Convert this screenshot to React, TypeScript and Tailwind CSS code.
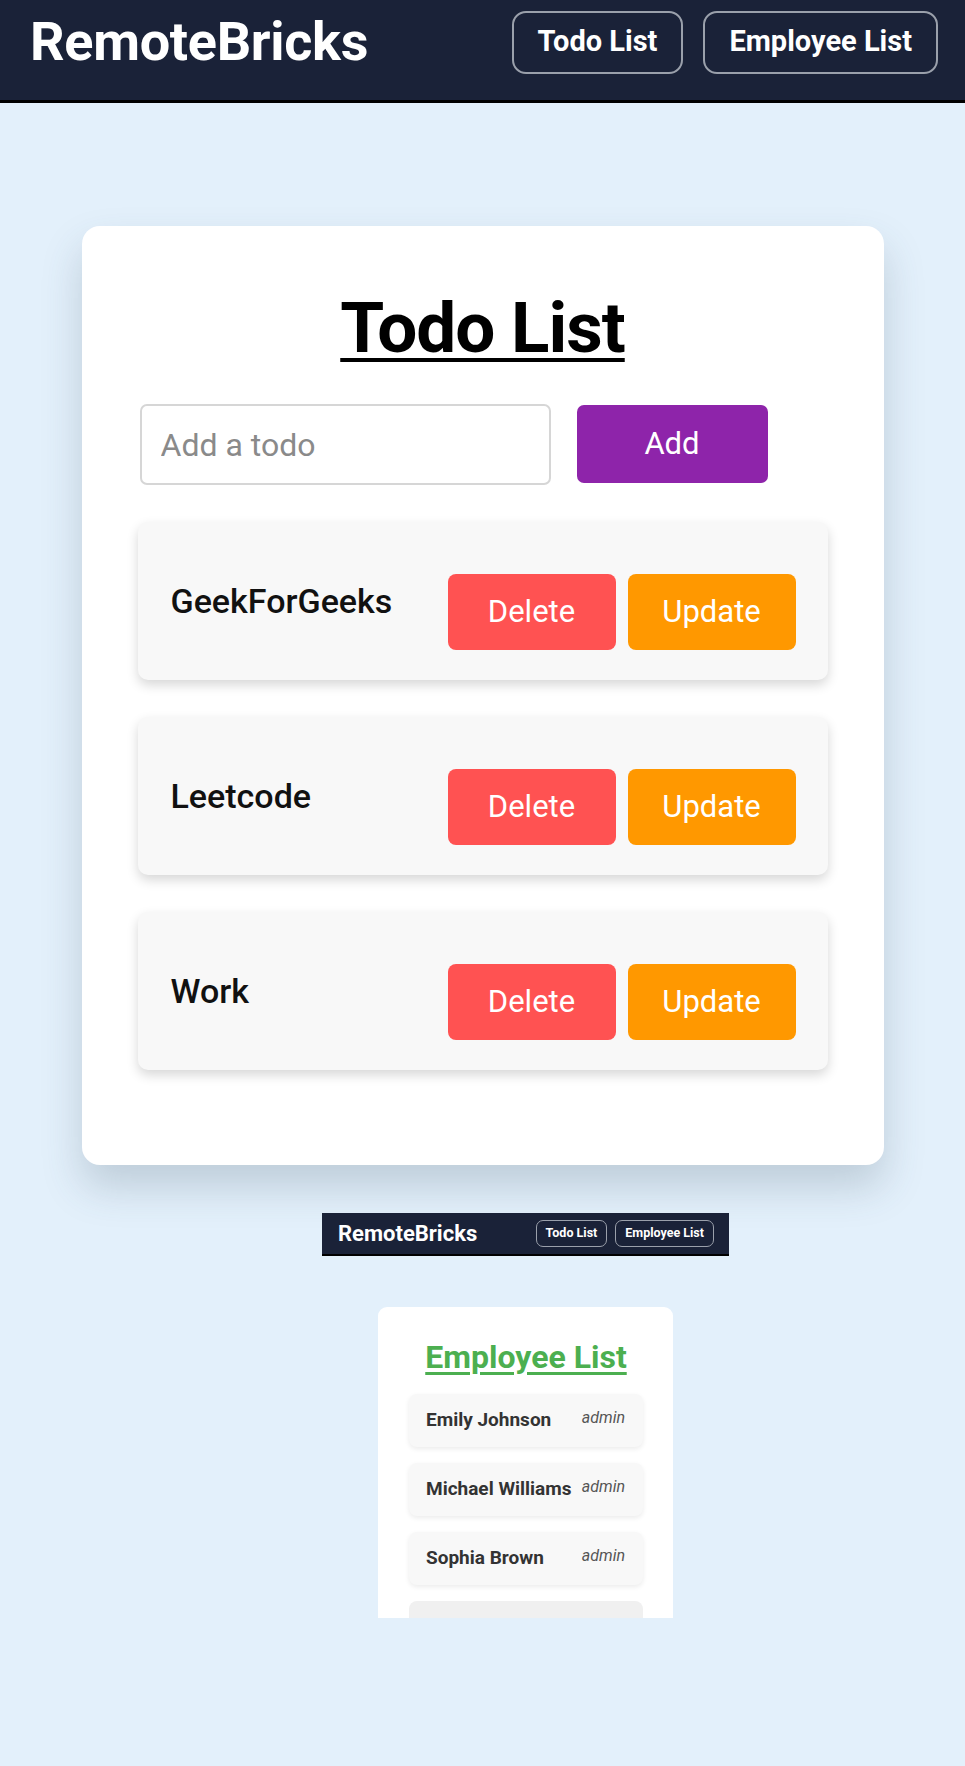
import { useState } from 'react';

type Todo = { id: number; text: string };
type Employee = { id: number; name: string; role: string };

const initialTodos: Todo[] = [
  { id: 1, text: 'GeekForGeeks' },
  { id: 2, text: 'Leetcode' },
  { id: 3, text: 'Work' }
];

const employees: Employee[] = [
  { id: 1, name: 'Emily Johnson', role: 'admin' },
  { id: 2, name: 'Michael Williams', role: 'admin' },
  { id: 3, name: 'Sophia Brown', role: 'admin' }
];

const Navbar = () => (
  <header className="flex h-[103px] items-center justify-between border-b-[3px] border-black bg-[#1a2238] pb-4 pl-[30px] pr-[27px]">
    <h1 className="text-[54px] leading-none font-bold tracking-[-0.3px] text-white">RemoteBricks</h1>
    <nav className="flex gap-5">
      <button className="h-[63px] rounded-[14px] border-2 border-[#9aa0ab] px-[24px] text-[29px] font-bold text-white">
        Todo List
      </button>
      <button className="h-[63px] rounded-[14px] border-2 border-[#9aa0ab] px-[24px] text-[29px] font-bold text-white">
        Employee List
      </button>
    </nav>
  </header>
);

const MiniNavbar = () => (
  <div className="flex h-[43px] items-center justify-between border-b-2 border-black bg-[#1a2238] pl-4 pr-[15px]">
    <span className="text-[22px] leading-none font-bold text-white">RemoteBricks</span>
    <div className="flex gap-2">
      <span className="flex h-[27px] items-center rounded-[7px] border border-[#9aa0ab] px-[9px] text-[12.5px] font-bold text-white">
        Todo List
      </span>
      <span className="flex h-[27px] items-center rounded-[7px] border border-[#9aa0ab] px-[9px] text-[12.5px] font-bold text-white">
        Employee List
      </span>
    </div>
  </div>
);

const TodoCard = () => {
  const [todos, setTodos] = useState<Todo[]>(initialTodos);
  const [draft, setDraft] = useState('');

  const addTodo = () => {
    if (!draft.trim()) return;
    setTodos((prev) => [...prev, { id: Date.now(), text: draft.trim() }]);
    setDraft('');
  };

  return (
    <section className="mx-auto mt-[123px] w-[802px] rounded-[18px] bg-white px-[56px] pt-[66px] pb-[95px] shadow-[0_22px_40px_rgba(60,80,100,0.22)]">
      <h2 className="text-center text-[71px] leading-none font-bold tracking-[-1px] text-black underline decoration-[4px] underline-offset-[6px]">
        Todo List
      </h2>
      <div className="mt-[41px] flex gap-[26px] pl-[2px]">
        <input
          value={draft}
          onChange={(e) => setDraft(e.target.value)}
          placeholder="Add a todo"
          className="h-[81px] w-[411px] rounded-[7px] border-2 border-[#d6d6d6] bg-white px-[19px] text-[32px] text-black outline-none placeholder:text-[#8a8a8a]"
        />
        <button
          onClick={addTodo}
          className="mt-[1px] h-[78px] w-[191px] rounded-[7px] bg-[#8e24aa] text-[31px] text-white"
        >
          Add
        </button>
      </div>
      <ul className="mt-[37px] flex flex-col gap-[37px]">
        {todos.map((todo) => (
          <li
            key={todo.id}
            className="flex h-[158px] items-center justify-between rounded-[10px] bg-[#f8f8f8] pr-[32px] pl-[33px] shadow-[0_5px_12px_rgba(0,0,0,0.16)]"
          >
            <span className="text-[34px] font-medium text-[#111]">{todo.text}</span>
            <div className="mt-[22px] flex gap-3">
              <button
                onClick={() => setTodos((prev) => prev.filter((t) => t.id !== todo.id))}
                className="h-[76px] w-[168px] rounded-[8px] bg-[#ff5252] text-[31px] text-white"
              >
                Delete
              </button>
              <button className="h-[76px] w-[168px] rounded-[8px] bg-[#ff9800] text-[31px] text-white">
                Update
              </button>
            </div>
          </li>
        ))}
      </ul>
    </section>
  );
};

const EmployeePreview = () => (
  <div className="mt-[48px] ml-[322px] w-[407px]">
    <MiniNavbar />
    <div className="mx-auto mt-[51px] h-[311px] w-[295px] overflow-hidden rounded-t-[9px] bg-white px-[31px] pt-[34px] pr-[30px]">
      <h3 className="text-center text-[32px] leading-none font-bold text-[#4caf50] underline decoration-[3px] underline-offset-[4px]">
        Employee List
      </h3>
      <ul className="mt-[21px] flex flex-col gap-[16px]">
        {employees.map((emp) => (
          <li
            key={emp.id}
            className="flex h-[53px] items-center justify-between rounded-[8px] bg-[#f8f8f8] pr-[18px] pl-[17px] shadow-[0_2px_5px_rgba(0,0,0,0.08)]"
          >
            <span className="text-[19px] font-bold text-[#333]">{emp.name}</span>
            <span className="mb-[5px] text-[16px] text-[#555] italic">{emp.role}</span>
          </li>
        ))}
        {/* next row is cut off by the preview frame */}
        <li className="h-[53px] shrink-0 rounded-[8px] bg-[#f0f0f0]" />
      </ul>
    </div>
  </div>
);

export default function App() {
  return (
    <div className="min-h-screen bg-[#e3f0fb] font-['Roboto','Liberation_Sans',sans-serif]">
      <Navbar />
      <TodoCard />
      <EmployeePreview />
    </div>
  );
}
